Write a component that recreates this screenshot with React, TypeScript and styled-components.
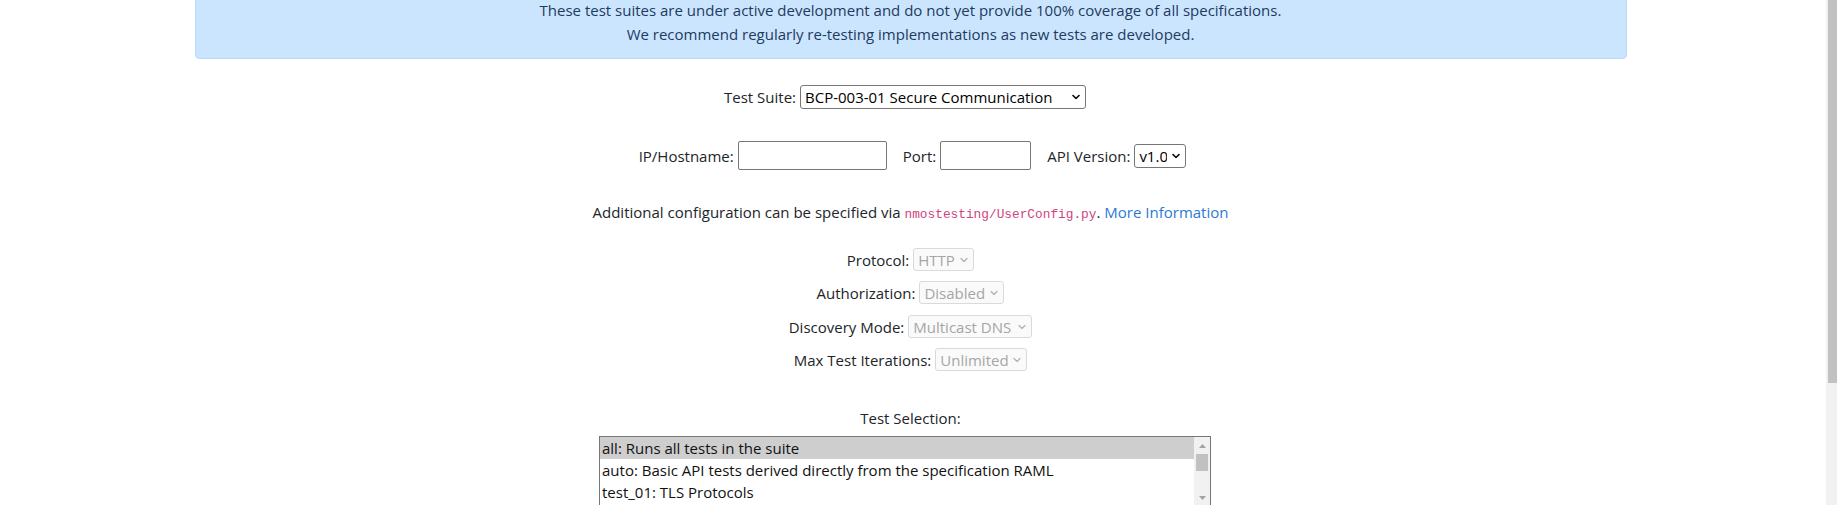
import React from "react";
import styled, { createGlobalStyle } from "styled-components";

const GlobalStyle = createGlobalStyle`
  html, body {
    margin: 0;
    padding: 0;
    height: 505px;
    overflow: hidden;
    background: #ffffff;
  }
  body {
    font-family: "Open Sans", "Segoe UI", "Noto Sans", sans-serif;
    font-size: 15px;
    line-height: 24px;
    color: #212529;
  }
`;

const Page = styled.div`
  display: flex;
  width: 100%;
  height: 505px;
  overflow: hidden;
`;

const Main = styled.main`
  flex: 1;
  min-width: 0;
  padding-right: 5px;
`;

const PageScrollbar = styled.div`
  flex: none;
  width: 11px;
  background: #f1f1f1;
  display: flex;
  justify-content: flex-end;
`;

const PageThumb = styled.div`
  width: 9px;
  height: 383px;
  background: #c1c1c1;
`;

const Container = styled.div`
  width: 1432px;
  margin: -15px auto 0;
`;

const Alert = styled.div`
  background: #cce5ff;
  border: 1px solid #b8daff;
  border-radius: 4px;
  padding: 12px 20px;
  color: #1d3b5e;
  text-align: center;
`;

const FieldRow = styled.div<{ $mt: number; $h: number; $gap?: number; $shift?: number }>`
  display: flex;
  justify-content: center;
  align-items: center;
  gap: ${(p) => p.$gap ?? 4}px;
  margin-top: ${(p) => p.$mt}px;
  height: ${(p) => p.$h}px;
  padding-left: ${(p) => ((p.$shift ?? 0) > 0 ? p.$shift : 0)}px;
  padding-right: ${(p) => ((p.$shift ?? 0) < 0 ? -(p.$shift as number) : 0)}px;
`;

const Group = styled.div`
  display: flex;
  align-items: center;
  gap: 4px;
`;

const Label = styled.label`
  white-space: nowrap;
`;

const TextLine = styled.p<{ $mt: number }>`
  margin: ${(p) => p.$mt}px 0 0;
  text-align: center;
  white-space: nowrap;
`;

const TextInput = styled.input<{ $w: number }>`
  box-sizing: border-box;
  width: ${(p) => p.$w}px;
  height: 29px;
  border: 1px solid #767676;
  border-radius: 2px;
  padding: 1px 3px;
  font: inherit;
  background: #fff;
`;

const SelectWrap = styled.span`
  position: relative;
  display: inline-flex;
`;

const NativeSelect = styled.select<{ $w: number; $h: number }>`
  appearance: none;
  -webkit-appearance: none;
  box-sizing: border-box;
  width: ${(p) => p.$w}px;
  height: ${(p) => p.$h}px;
  border: 1px solid #767676;
  border-radius: 3px;
  background: #ffffff;
  color: #000000;
  font-family: "Open Sans", "Segoe UI", sans-serif;
  font-size: 15px;
  padding: 0 18px 0 4px;
  margin: 0;
  &:disabled {
    color: #a6a6a6;
    border-color: #dadada;
    background: #fafafa;
    opacity: 1;
  }
`;

const Chevron = styled.svg<{ $disabled?: boolean }>`
  position: absolute;
  right: 6px;
  top: 50%;
  transform: translateY(-50%);
  pointer-events: none;
  stroke: ${(p) => (p.$disabled ? "#b4b4b4" : "#111111")};
`;

const Code = styled.code`
  font-family: "Liberation Mono", "DejaVu Sans Mono", monospace;
  font-size: 12.8px;
  color: #d0437f;
`;

const Link = styled.a`
  color: #2a7ad3;
  text-decoration: none;
`;

const ListRow = styled.div`
  display: flex;
  justify-content: center;
  margin-top: 6px;
  padding-right: 11px;
`;

const ListBox = styled.div`
  box-sizing: border-box;
  width: 612px;
  height: 71px;
  border: 1px solid #767676;
  display: flex;
  overflow: hidden;
  background: #fff;
`;

const Options = styled.div`
  flex: 1;
  min-width: 0;
`;

const Option = styled.div<{ $selected?: boolean }>`
  height: 22px;
  line-height: 22px;
  padding-left: 2px;
  white-space: nowrap;
  color: #111;
  background: ${(p) => (p.$selected ? "#cecece" : "transparent")};
`;

const ListScroll = styled.div`
  flex: none;
  width: 16px;
  background: #f1f1f1;
  display: flex;
  flex-direction: column;
  align-items: center;
`;

const ScrollArrow = styled.div`
  height: 17px;
  width: 100%;
  display: flex;
  align-items: center;
  justify-content: center;
`;

const ScrollThumb = styled.div`
  width: 12px;
  height: 17px;
  background: #c1c1c1;
`;

const ScrollSpacer = styled.div`
  flex: 1;
`;

type SelectProps = {
  value: string;
  w: number;
  h: number;
  disabled?: boolean;
};

function Select({ value, w, h, disabled }: SelectProps) {
  return (
    <SelectWrap>
      <NativeSelect $w={w} $h={h} disabled={disabled} defaultValue={value}>
        <option value={value}>{value}</option>
      </NativeSelect>
      <Chevron
        $disabled={disabled}
        width="8"
        height="5"
        viewBox="0 0 8 5"
        fill="none"
        strokeWidth={disabled ? 1.4 : 1.7}
        strokeLinecap="round"
        strokeLinejoin="round"
      >
        <polyline points="1,1 4,4 7,1" />
      </Chevron>
    </SelectWrap>
  );
}

function Triangle({ up }: { up?: boolean }) {
  return (
    <svg width="7" height="4" viewBox="0 0 7 4">
      <polygon points={up ? "0,4 3.5,0 7,4" : "0,0 7,0 3.5,4"} fill="#a3a3a3" />
    </svg>
  );
}

export default function App() {
  return (
    <>
      <GlobalStyle />
      <Page>
        <Main>
          <Container>
            <Alert>
              These test suites are under active development and do not yet provide 100% coverage of all specifications.
              <br />
              We recommend regularly re-testing implementations as new tests are developed.
            </Alert>

            <FieldRow $mt={26} $h={24} $shift={-11}>
              <Label>Test Suite:</Label>
              <Select value="BCP-003-01 Secure Communication" w={286} h={24} />
            </FieldRow>

            <FieldRow $mt={32} $h={29} $gap={16} $shift={4}>
              <Group>
                <Label>IP/Hostname:</Label>
                <TextInput $w={149} type="text" />
              </Group>
              <Group>
                <Label>Port:</Label>
                <TextInput $w={91} type="text" />
              </Group>
              <Group>
                <Label>API Version:</Label>
                <Select value="v1.0" w={52} h={24} />
              </Group>
            </FieldRow>

            <TextLine $mt={30}>
              Additional configuration can be specified via <Code>nmostesting/UserConfig.py</Code>.{" "}
              <Link href="#">More Information</Link>
            </TextLine>

            <FieldRow $mt={21} $h={23}>
              <Label>Protocol:</Label>
              <Select value="HTTP" w={61} h={23} disabled />
            </FieldRow>
            <FieldRow $mt={10} $h={23}>
              <Label>Authorization:</Label>
              <Select value="Disabled" w={85} h={23} disabled />
            </FieldRow>
            <FieldRow $mt={11} $h={23}>
              <Label>Discovery Mode:</Label>
              <Select value="Multicast DNS" w={124} h={23} disabled />
            </FieldRow>
            <FieldRow $mt={10} $h={23}>
              <Label>Max Test Iterations:</Label>
              <Select value="Unlimited" w={92} h={23} disabled />
            </FieldRow>

            <TextLine $mt={35}>Test Selection:</TextLine>

            <ListRow>
              <ListBox>
                <Options>
                  <Option $selected>all: Runs all tests in the suite</Option>
                  <Option>auto: Basic API tests derived directly from the specification RAML</Option>
                  <Option>test_01: TLS Protocols</Option>
                </Options>
                <ListScroll>
                  <ScrollArrow>
                    <Triangle up />
                  </ScrollArrow>
                  <ScrollThumb />
                  <ScrollSpacer />
                  <ScrollArrow>
                    <Triangle />
                  </ScrollArrow>
                </ListScroll>
              </ListBox>
            </ListRow>
          </Container>
        </Main>
        <PageScrollbar>
          <PageThumb />
        </PageScrollbar>
      </Page>
    </>
  );
}
